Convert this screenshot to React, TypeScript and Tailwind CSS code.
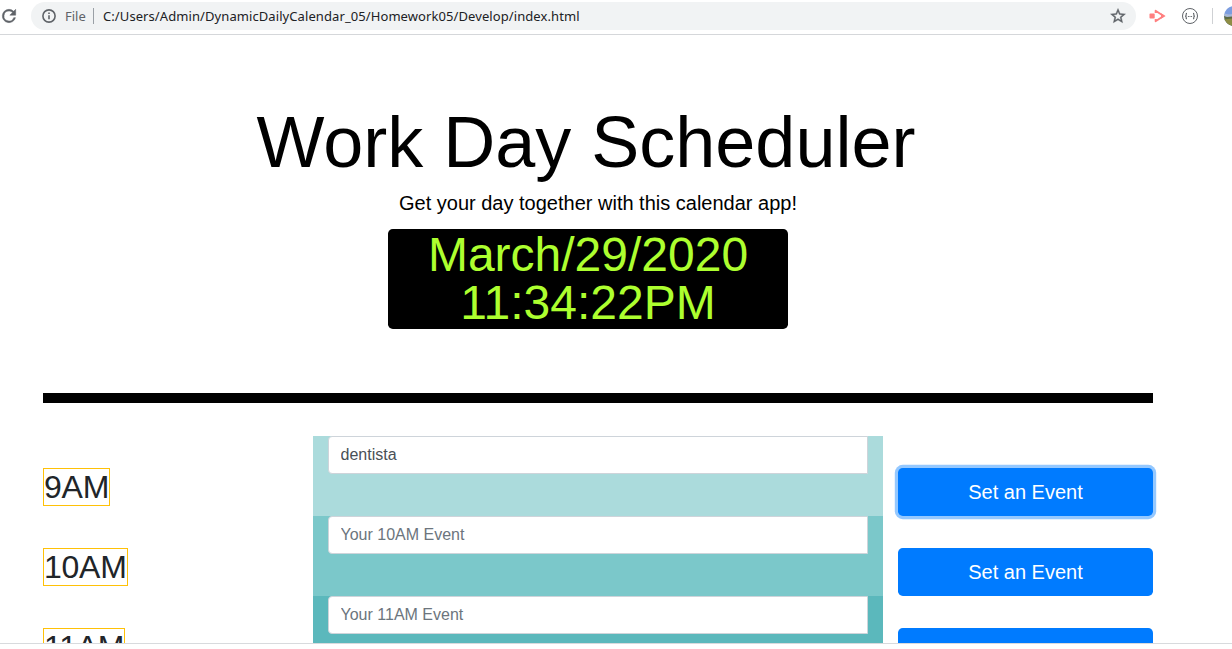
import React from "react";

type Slot = {
  label: string;
  value?: string;
  shade: string;
  focused?: boolean;
};

const slots: Slot[] = [
  { label: "9AM", value: "dentista", shade: "bg-[#abdbdc]", focused: true },
  { label: "10AM", shade: "bg-[#7bc8ca]" },
  { label: "11AM", shade: "bg-[#5bb8bc]" },
];

function ReloadIcon() {
  return (
    <svg width="20" height="20" viewBox="0 0 24 24" fill="#5f6368" stroke="#5f6368" strokeWidth="0.6" className="shrink-0">
      <path d="M17.65 6.35A7.96 7.96 0 0 0 12 4a8 8 0 1 0 7.73 10h-2.08A6 6 0 1 1 12 6c1.66 0 3.14.69 4.22 1.78L13 11h7V4l-2.35 2.35z" />
    </svg>
  );
}

function InfoIcon() {
  return (
    <svg width="16" height="16" viewBox="0 0 16 16" fill="none" className="shrink-0">
      <circle cx="8" cy="8" r="6.1" stroke="#5f6368" strokeWidth="1.6" />
      <path d="M8 7.2v4M8 4.5v1.6" stroke="#5f6368" strokeWidth="1.6" />
    </svg>
  );
}

function StarIcon() {
  return (
    <svg width="18" height="18" viewBox="0 0 24 24" fill="#5f6368" stroke="#5f6368" strokeWidth="0.5" className="shrink-0">
      <path d="M22 9.24l-7.19-.62L12 2 9.19 8.63 2 9.24l5.46 4.73L5.82 21 12 17.27 18.18 21l-1.63-7.03L22 9.24zM12 15.4l-3.76 2.27 1-4.28-3.32-2.88 4.38-.38L12 6.1l1.71 4.04 4.38.38-3.32 2.88 1 4.28L12 15.4z" />
    </svg>
  );
}

function RecorderIcon() {
  return (
    <svg width="17" height="14" viewBox="0 0 17 14" className="shrink-0">
      <rect x="0.5" y="4.6" width="5.2" height="5" rx="0.8" fill="#ff7f7f" />
      <path
        d="M6.6 4V1.7L14.6 7l-8 5.3V10"
        fill="none"
        stroke="#ff7f7f"
        strokeWidth="1.8"
        strokeLinejoin="round"
      />
      <path d="M12 4.2L16.6 7 12 9.8z" fill="#ff7f7f" />
    </svg>
  );
}

function BracesIcon() {
  return (
    <svg width="18" height="18" viewBox="0 0 18 18" fill="none" stroke="#5f6368" className="shrink-0">
      <circle cx="9" cy="9" r="7.5" strokeWidth="1" />
      <path
        d="M6 6.4c-1.2 0-.8.8-.8 1.5S5 9.1 4.1 9.1c.9 0 1.1.4 1.1 1.2s-.4 1.4.8 1.4M12 6.4c1.2 0 .8.8.8 1.5s.2 1.2 1.1 1.2c-.9 0-1.1.4-1.1 1.2s.4 1.4-.8 1.4"
        strokeWidth="1.1"
      />
      <path d="M6.9 9.5h4.4" strokeWidth="1" strokeDasharray="1 0.6" />
    </svg>
  );
}

function Avatar() {
  return (
    <svg width="8" height="20" viewBox="0 0 8 20" className="shrink-0">
      <defs>
        <clipPath id="avatar">
          <circle cx="10" cy="10" r="10" />
        </clipPath>
      </defs>
      <g clipPath="url(#avatar)">
        <rect width="8" height="20" fill="#7c9de0" />
        <path d="M0 7.5L5 8.5 8 8v4H0z" fill="#a8b8d8" />
        <path d="M0 10l3 1 5-.4V20H0z" fill="#5c6a45" />
        <path d="M0 13.4l8-1V20H0z" fill="#8e8d45" />
      </g>
    </svg>
  );
}

function BrowserBar() {
  return (
    <header className="flex h-[35px] shrink-0 items-start overflow-hidden border-b border-[#d5d7da] bg-white">
      <div className="-ml-[1px] mt-[6px]">
        <ReloadIcon />
      </div>
      <div className="ml-3 mt-[2px] flex h-7 w-[1105px] shrink-0 items-center rounded-full bg-[#f1f3f4] pl-[10px] pr-[9px] font-['Noto_Sans','Open_Sans',sans-serif] text-[13px]">
        <InfoIcon />
        <span className="ml-2 w-[21px] pt-px text-[#5f6368]">File</span>
        <span className="ml-[7px] h-4 w-px bg-[#9aa0a6]" />
        <span className="ml-[9px] whitespace-nowrap pt-px tracking-[0.085px] text-[#202124]">
          C:/Users/Admin/DynamicDailyCalendar_05/Homework05/Develop/index.html
        </span>
        <span className="ml-auto">
          <StarIcon />
        </span>
      </div>
      <div className="mt-[2px] flex h-7 shrink-0 items-center">
        <span className="ml-[13px]">
          <RecorderIcon />
        </span>
        <span className="ml-[15px]">
          <BracesIcon />
        </span>
        <span className="ml-[13px] h-4 w-px bg-[#cfd1d4]" />
        <span className="ml-[11px]">
          <Avatar />
        </span>
      </div>
    </header>
  );
}

function HourRow({ label, value, shade, focused }: Slot) {
  return (
    <div className="flex h-20 shrink-0">
      <div className="w-[270px] pt-8">
        <span className="inline-block border border-[#ffc107] text-[32px] leading-9 tracking-[-0.25px] text-[#212529]">
          {label}
        </span>
      </div>
      <div className={`w-[570px] px-[15px] ${shade}`}>
        <input
          type="text"
          defaultValue={value}
          placeholder={`Your ${label} Event`}
          className="block h-[38px] w-full rounded-l border border-[#ced4da] bg-white px-[11.5px] text-base text-[#495057] outline-none placeholder:text-[#6c757d]"
        />
      </div>
      <div className="ml-[15px] w-[255px] pt-8">
        <button
          className={`block h-12 w-full rounded-[4.8px] bg-[#007bff] text-xl text-white ${
            focused ? "shadow-[0_0_0_3.2px_rgba(0,123,255,0.42)]" : ""
          }`}
        >
          Set an Event
        </button>
      </div>
    </div>
  );
}

export default function App() {
  return (
    <div className="flex h-[649px] w-[1232px] flex-col overflow-hidden bg-white font-['Liberation_Sans',Arial,sans-serif]">
      <BrowserBar />
      <main className="flex h-[609px] shrink-0 flex-col overflow-hidden border-b border-[#d8dadd] pl-[43px] pr-[79px]">
        <section className="flex h-[358px] shrink-0 flex-col items-center pt-16 text-black">
          <h1 className="-ml-6 text-[72px] leading-[86px]">Work Day Scheduler</h1>
          <p className="mt-[3px] text-xl leading-[30px]">
            Get your day together with this calendar app!
          </p>
          <div className="-ml-5 mt-[11px] h-[100px] w-[400px] rounded-[4.8px] bg-black pt-[2px] text-center text-5xl leading-[48px] text-[#adff2f]">
            <div>March/29/2020</div>
            <div>11:34:22PM</div>
          </div>
        </section>
        <div className="h-[10px] shrink-0 bg-black" />
        <section className="mt-[33px] flex flex-col">
          {slots.map((slot) => (
            <HourRow key={slot.label} {...slot} />
          ))}
        </section>
      </main>
    </div>
  );
}
